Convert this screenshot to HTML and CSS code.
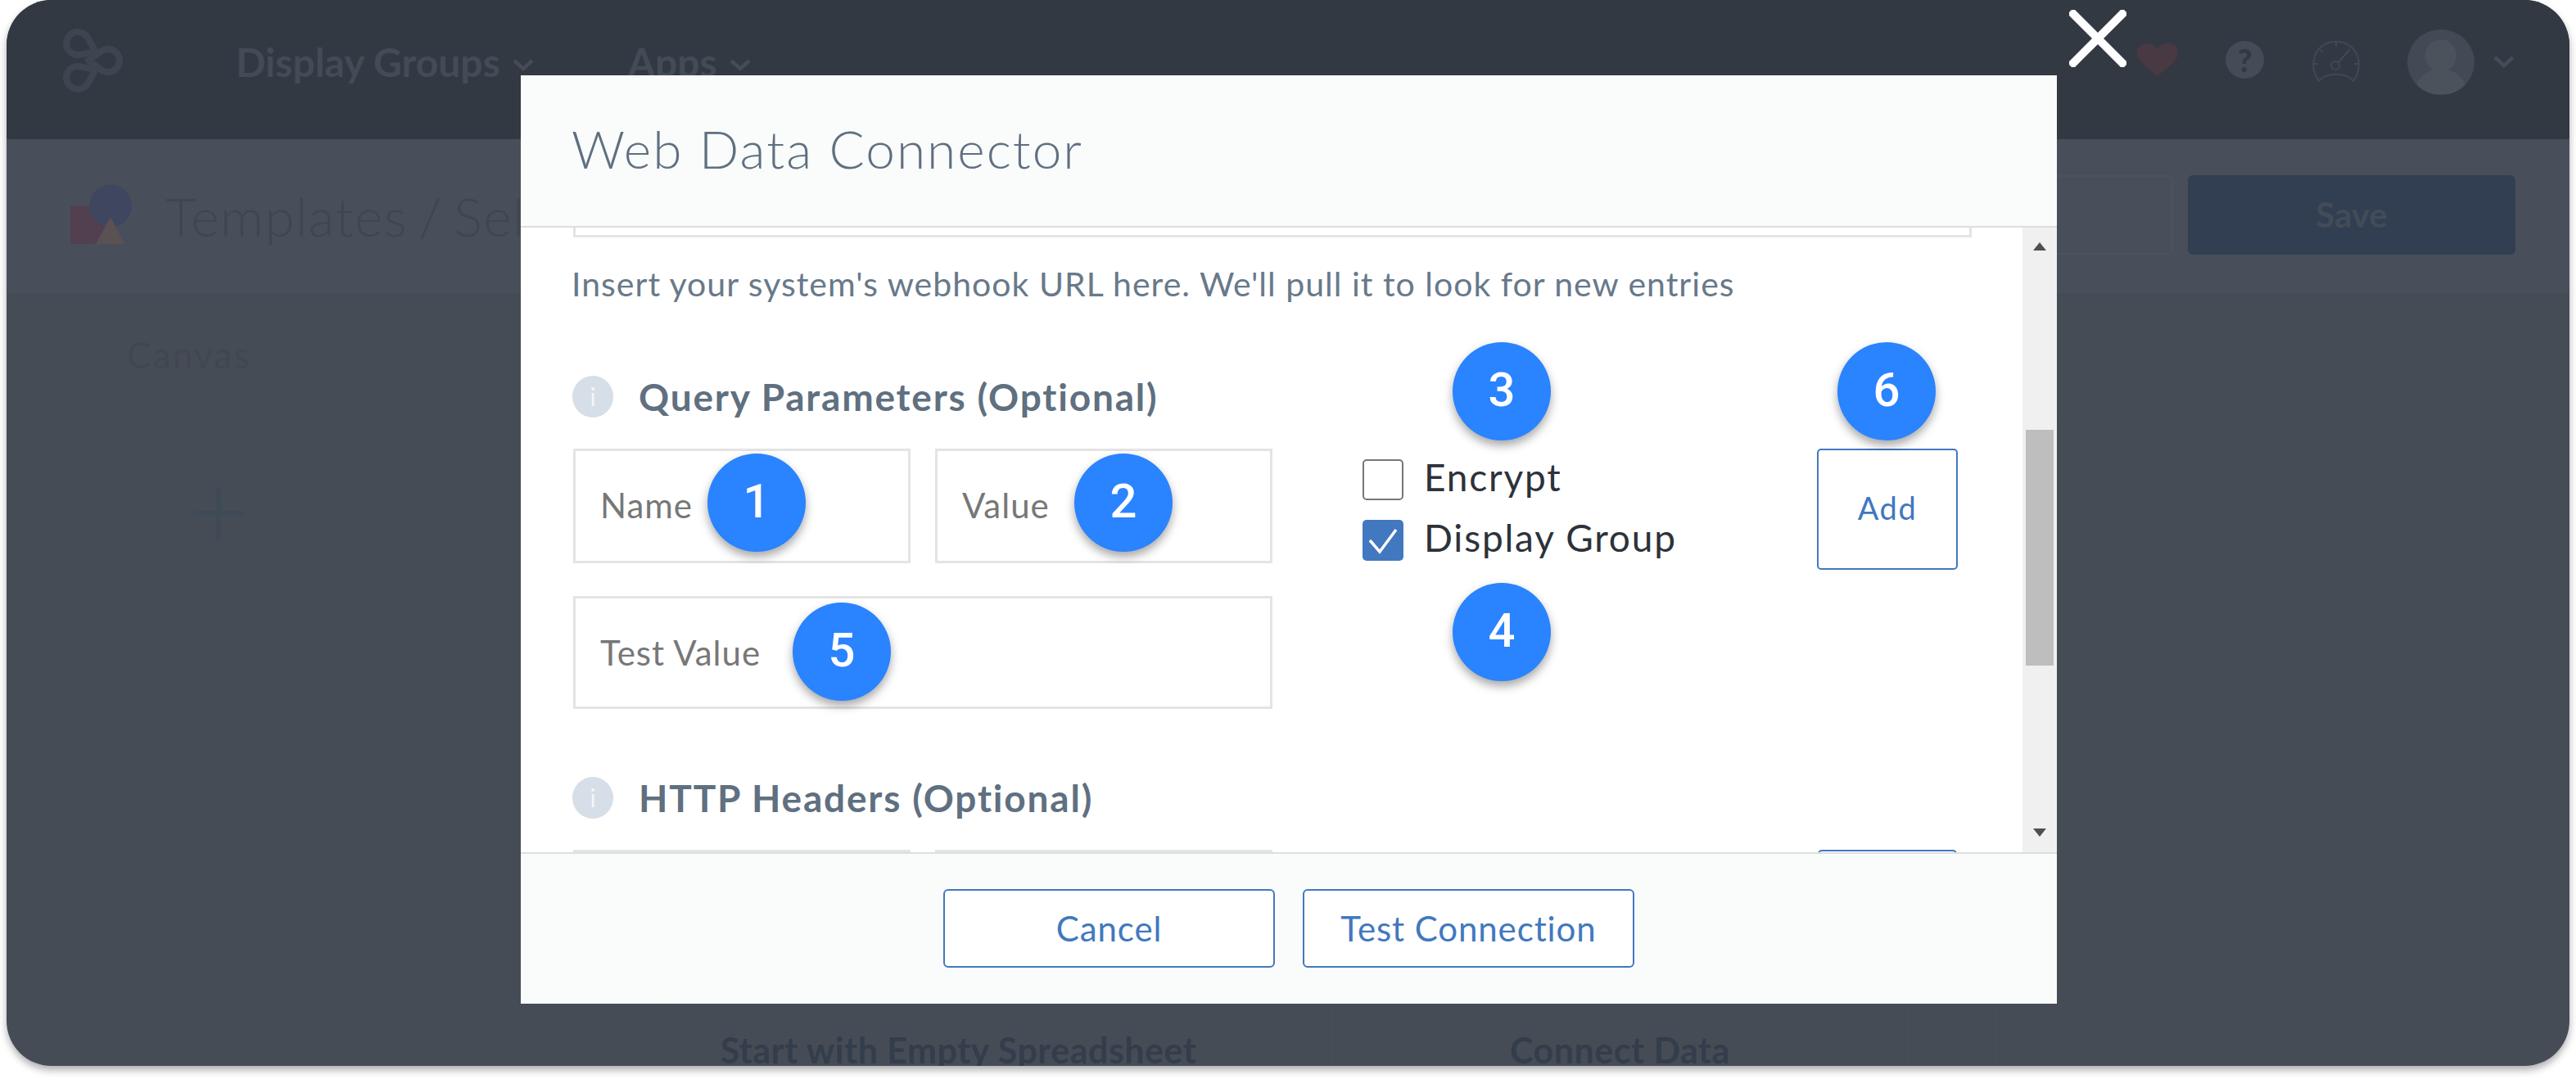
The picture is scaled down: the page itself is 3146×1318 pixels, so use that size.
FILE: index.html
```html
<!DOCTYPE html>
<html lang="en">
<head>
<meta charset="utf-8">
<title>Web Data Connector</title>
<link rel="stylesheet" href="styles.css">
</head>
<body>
<div class="window">
  <header class="topbar">
    <svg class="logo" viewBox="60 20 110 110" fill="none" stroke="#3e4551" stroke-width="8" stroke-linejoin="round">
      <path transform="translate(95 53) rotate(25)" d="M8.2 -11.4 A14 14 0 1 0 8.2 11.4 L24 0 Z"/>
      <path transform="translate(132 74) rotate(180)" d="M8.2 -11.4 A14 14 0 1 0 8.2 11.4 L24 0 Z"/>
      <path transform="translate(95 95) rotate(-25)" d="M8.2 -11.4 A14 14 0 1 0 8.2 11.4 L24 0 Z"/>
    </svg>
    <nav class="mainnav">
      <span class="navitem">Display Groups<svg class="chev" viewBox="0 0 26 15"><path d="M2 2 L13 12 L24 2"/></svg></span>
      <span class="navitem">Apps<svg class="chev" viewBox="0 0 26 15"><path d="M2 2 L13 12 L24 2"/></svg></span>
    </nav>
    <div class="topicons">
      <svg class="heart" viewBox="0 0 50 40"><path d="M25 40 C14 31 0 22 0 11 C0 4 6 0 12 0 C18 0 23 3 25 7 C27 3 32 0 38 0 C44 0 50 4 50 11 C50 22 36 31 25 40Z" fill="#483943"/></svg>
      <span class="help">?</span>
      <svg class="gauge" viewBox="0 0 60 50" fill="none" stroke="#3c4a5a" stroke-width="2">
        <path d="M8 49 C-6 30 2 1 29 1 C56 1 64 30 50 49 L47 46 C38 39 20 39 11 46Z"/>
        <circle cx="28" cy="30" r="5"/>
        <path d="M32 26 L46 10 M29 2 V7 M2 28 H7 M51 28 H56 M10 11 L13 14"/>
      </svg>
      <span class="avatar"><svg viewBox="0 0 82 80" fill="#4b525c"><ellipse cx="41" cy="32" rx="19" ry="20"/><path d="M10 72 C14 54 28 49 41 49 C54 49 68 54 72 72 C60 82 22 82 10 72Z"/></svg></span>
      <svg class="chev" viewBox="0 0 26 15"><path d="M2 2 L13 12 L24 2"/></svg>
    </div>
  </header>
  <section class="subbar">
    <svg class="tplicon" viewBox="0 0 75 73">
      <rect x="0" y="27" width="44" height="46" fill="#523f50"/>
      <ellipse cx="49" cy="26.5" rx="26" ry="26" fill="#3f4660"/>
      <path d="M49 40 L66 73 H31Z" fill="#5a5152"/>
    </svg>
    <span class="crumb">Templates / Select</span>
    <div class="subactions">
      <span class="ghost"></span>
      <span class="save">Save</span>
    </div>
  </section>
  <main class="canvas">
    <span class="canvas-title">Canvas</span>
    <div class="canvas-row">
      <span class="addtile"><svg viewBox="0 0 62 62" stroke="#3f4a57" stroke-width="6"><path d="M31 0 V62 M0 31 H62"/></svg></span>
      <div class="cards">
        <div class="card"><span>Start with Empty Spreadsheet</span></div>
        <div class="card"><span>Connect Data</span></div>
      </div>
    </div>
  </main>

  <section class="modal">
    <div class="modal-head">Web Data Connector</div>
    <div class="modal-body">
      <div class="scrollarea">
        <div class="urlfield"></div>
        <p class="hint">Insert your system's webhook URL here. We'll pull it to look for new entries</p>
        <h3 class="sect"><span class="info">i</span>Query Parameters (Optional)</h3>
        <div class="params">
          <label class="field">Name</label>
          <label class="field">Value</label>
          <div class="checks">
            <div class="check"><span class="box"></span>Encrypt</div>
            <div class="check"><span class="box on"><svg viewBox="0 0 50 50" fill="none" stroke="#fff" stroke-width="3.5"><path d="M9 25 L21 39 L41 12"/></svg></span>Display Group</div>
          </div>
          <span class="addbtn">Add</span>
          <label class="field wide">Test Value</label>
          <span class="badge b1">1</span>
          <span class="badge b2">2</span>
          <span class="badge b3">3</span>
          <span class="badge b4">4</span>
          <span class="badge b5">5</span>
          <span class="badge b6">6</span>
        </div>
        <h3 class="sect second"><span class="info">i</span>HTTP Headers (Optional)</h3>
        <div class="params">
          <label class="field"></label>
          <label class="field"></label>
          <div class="checks"></div>
          <span class="addbtn next"></span>
        </div>
      </div>
      <div class="scrollbar">
        <span class="arrow up"></span>
        <span class="thumb"></span>
        <span class="arrow down"></span>
      </div>
    </div>
    <div class="modal-foot">
      <span class="btn">Cancel</span>
      <span class="btn">Test Connection</span>
    </div>
  </section>

  <svg class="close" viewBox="0 0 70 70" stroke="#fff" stroke-width="10" stroke-linecap="square"><path d="M5 5 L65 65 M65 5 L5 65"/></svg>
</div>
</body>
</html>
```
FILE: styles.css
```css
* { box-sizing: border-box; }
html, body { margin: 0; padding: 0; background: #fff; }
body { width: 3146px; height: 1318px; overflow: hidden; font-family: "Lato", "Liberation Sans", sans-serif; }

.window {
  position: relative;
  margin: 0 8px;
  width: 3130px;
  height: 1302px;
  border-radius: 55px;
  background: #464c56;
  box-shadow: 0 5px 10px rgba(0,0,0,.32);
  display: flex;
  flex-direction: column;
}

/* top bar */
.topbar {
  height: 170px;
  flex: none;
  background: #323943;
  border-radius: 55px 55px 0 0;
  display: flex;
  align-items: flex-start;
}
.logo { width: 110px; height: 110px; margin: 20px 0 0 52px; flex: none; }
.mainnav { display: flex; margin: 48px 0 0 118px; gap: 115px; }
.navitem { display: flex; align-items: center; gap: 15px; font-size: 48px; line-height: 56px; font-weight: 700; color: #434b57; }
.chev { width: 26px; height: 15px; fill: none; stroke: #454c58; stroke-width: 4.5; flex: none; }
.navitem .chev { margin-top: 6px; }
.topicons { margin-left: auto; position: relative; width: 588px; height: 170px; }
.heart { position: absolute; left: 60px; top: 53px; width: 50px; height: 40px; }
.help { position: absolute; left: 168px; top: 50px; width: 47px; height: 46px; border-radius: 50%; background: #454b57; color: #323945; font-size: 38px; font-weight: 900; line-height: 46px; text-align: center; }
.gauge { position: absolute; left: 274px; top: 50px; width: 60px; height: 50px; }
.avatar { position: absolute; left: 390px; top: 36px; width: 82px; height: 80px; border-radius: 50%; background: #444a55; overflow: hidden; }
.avatar svg { display: block; width: 82px; height: 80px; }
.topicons > .chev { position: absolute; left: 495px; top: 68px; }

/* template bar */
.subbar {
  height: 188px;
  flex: none;
  background: #494f5a;
  display: flex;
  align-items: center;
  padding: 0 66px 0 78px;
}
.tplicon { width: 75px; height: 73px; flex: none; margin-top: -6px; }
.crumb { margin: -2px 0 0 41px; font-size: 66px; letter-spacing: 1.2px; word-spacing: -6px; font-weight: 300; color: #3f4651; white-space: nowrap; }
.subactions { margin-left: auto; display: flex; gap: 18px; margin-top: -3px; }
.ghost { width: 300px; height: 97px; border: 2px solid #4d535d; border-radius: 6px; }
.save { width: 400px; height: 97px; border-radius: 6px; background: #323e52; color: #434b57; font-size: 42px; font-weight: 700; line-height: 97px; text-align: center; }

/* canvas behind the dialog */
.canvas { flex: 1; position: relative; overflow: hidden; padding-top: 48px; border-radius: 0 0 55px 55px; }
.canvas-title { display: block; margin-left: 147px; font-size: 44px; letter-spacing: 2.2px; line-height: 54px; color: #404751; }
.canvas-row { display: flex; margin-top: 52px; border-top: 1px solid #434a53; padding: 30px 0 0 170px; }
.addtile { display: block; width: 176px; height: 800px; padding-top: 53px; border-left: 1px solid #434a53; border-right: 1px solid #434a53; }
.addtile svg { display: block; width: 62px; height: 62px; margin-left: 57px; }
.cards { display: flex; gap: 95px; margin-left: 361px; height: 765px; padding: 0 98px; border-left: 1px solid #434a53; border-right: 1px solid #434a53; }
.card { width: 713px; border-left: 1px solid #434a53; border-right: 1px solid #434a53; display: flex; align-items: flex-end; justify-content: center; }
.card span { font-size: 43px; letter-spacing: .5px; line-height: 50px; font-weight: 700; color: #333d4c; }

/* dialog */
.modal {
  position: absolute;
  left: 628px;
  top: 92px;
  width: 1876px;
  height: 1134px;
  background: #fff;
  display: flex;
  flex-direction: column;
}
.modal-head {
  height: 186px;
  flex: none;
  background: #fafbfb;
  border-bottom: 2px solid #dedede;
  padding: 52px 0 0 62px;
  font-size: 64px;
  line-height: 76px;
  font-weight: 300;
  letter-spacing: 2px;
  color: #5f7080;
}
.modal-body { flex: 1; min-height: 0; display: flex; background: #fff; }
.scrollarea { flex: 1; min-width: 0; overflow: hidden; padding-left: 64px; }
.urlfield { width: 1708px; height: 100px; margin-top: -88px; border: 3px solid #e4e4e4; }
.hint { margin: 34px 0 0 -2px; font-size: 41px; letter-spacing: 1px; line-height: 46px; color: #68798a; white-space: nowrap; }
.sect { margin: 88px 0 0 -1px; display: flex; align-items: center; height: 52px; font-size: 46px; letter-spacing: 1.8px; font-weight: 700; color: #5f7080; }
.sect.second { margin-top: 82px; }
.info { width: 50px; height: 51px; margin-right: 31px; border-radius: 50%; background: #d6dee7; color: #f4f6f8; font-size: 30px; letter-spacing: 0; font-weight: 400; line-height: 51px; text-align: center; }

.params {
  position: relative;
  margin-top: 38px;
  display: grid;
  grid-template-columns: 412px 412px 605px 172px;
  grid-template-rows: 140px 138px;
  column-gap: 30px;
  row-gap: 40px;
  width: 1720px;
}
.field {
  display: flex;
  align-items: center;
  padding: 0 0 2px 30px;
  border: 3px solid #e4e4e4;
  font-size: 42px;
  letter-spacing: 1px;
  color: #777;
}
.field.wide { grid-column: 1 / 3; padding-bottom: 0; }
.checks { margin-left: 80px; padding-top: 9px; display: flex; flex-direction: column; gap: 24px; width: 475px; }
.check { display: flex; align-items: center; gap: 25px; height: 50px; font-size: 46px; letter-spacing: 1.8px; color: #2d323a; white-space: nowrap; }
.box { width: 50px; height: 50px; margin-top: 8px; flex: none; border: 2px solid #777; border-radius: 5px; background: #fff; }
.box.on { border: 0; background: #4278bf; }
.box svg { display: block; width: 50px; height: 50px; }
.addbtn { border: 2px solid #4278bf; border-radius: 5px; height: 148px; padding-bottom: 4px; display: flex; align-items: center; justify-content: center; font-size: 38px; letter-spacing: 1.5px; color: #4278bf; }
.addbtn.next { margin-left: 1px; width: 170px; }

.badge {
  position: absolute;
  width: 120px;
  height: 120px;
  border-radius: 50%;
  background: #2a83ff;
  box-shadow: 0 6px 12px rgba(0,0,0,.35);
  color: #fff;
  font-family: "Roboto", sans-serif;
  font-weight: 500;
  font-size: 58px;
  line-height: 116px;
  text-align: center;
}
.b1 { left: 164px; top: 6px; }
.b2 { left: 612px; top: 6px; }
.b3 { left: 1074px; top: -130px; }
.b4 { left: 1074px; top: 164px; }
.b5 { left: 268px; top: 188px; }
.b6 { left: 1544px; top: -130px; }

/* scrollbar */
.scrollbar { width: 42px; flex: none; background: #f0f0f0; position: relative; }
.thumb { position: absolute; left: 4px; top: 247px; width: 34px; height: 288px; background: #bebebe; }
.arrow { position: absolute; left: 13px; width: 0; height: 0; border-left: 8.5px solid transparent; border-right: 8.5px solid transparent; }
.arrow.up { top: 18px; border-bottom: 10px solid #505050; }
.arrow.down { bottom: 19px; border-top: 10px solid #505050; }

/* footer */
.modal-foot {
  height: 185px;
  flex: none;
  background: #fafbfb;
  border-top: 2px solid #dedede;
  display: flex;
  justify-content: center;
  align-items: flex-start;
  gap: 34px;
  padding-top: 43px;
}
.btn { width: 405px; height: 96px; border: 2px solid #4278bf; border-radius: 6px; background: #fff; color: #4278bf; font-size: 42px; letter-spacing: .9px; line-height: 92px; text-align: center; }

.close { position: absolute; left: 2519px; top: 12px; width: 70px; height: 70px; }
```
